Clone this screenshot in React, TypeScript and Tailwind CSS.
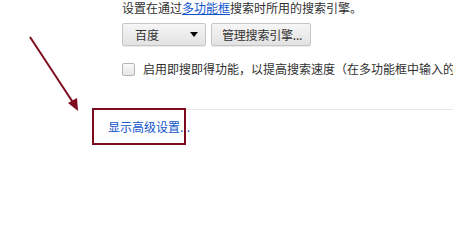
import { useState } from 'react'

const FONT = 'font-["Noto_Sans_CJK_SC","Liberation_Sans",sans-serif]'

function GrayButton({ children, className = '' }: { children: React.ReactNode; className?: string }) {
  return (
    <button
      className={`h-[23px] rounded-[2px] border border-[#c6c6c6] bg-gradient-to-b from-[#f6f6f6] to-[#e2e2e2] text-[12px] leading-none text-[#333] whitespace-nowrap shadow-[0_1px_0_rgba(0,0,0,0.08)] ${className}`}
    >
      {children}
    </button>
  )
}

export default function App() {
  const [instant, setInstant] = useState(false)

  return (
    <div className={`relative w-[453px] h-[237px] overflow-hidden bg-white ${FONT}`}>
      {/* Search section */}
      <div className="pl-[122px]">
        <div className="h-4 text-[12px] leading-4 text-[#303030] whitespace-nowrap">
          设置在通过<a className="text-[#1155cc] underline">多功能框</a>搜索时所用的搜索引擎。
        </div>

        <div className="mt-[7px] flex gap-[5px]">
          <GrayButton className="w-[84px] flex items-center justify-between pl-[12px] pr-[7px]">
            <span>百度</span>
            <span className="w-0 h-0 border-l-[4px] border-r-[4px] border-t-[5px] border-l-transparent border-r-transparent border-t-black" />
          </GrayButton>
          <GrayButton className="w-[100px] pl-[10px] pr-0 text-left tracking-[-0.2px]">管理搜索引擎...</GrayButton>
        </div>

        <label className="mt-[15px] flex items-center h-4 whitespace-nowrap">
          <span
            onClick={() => setInstant(!instant)}
            className="w-[13px] h-[13px] rounded-[2px] border border-[#b5b5b5] bg-gradient-to-b from-[#fafafa] to-[#e6e6e6] shrink-0"
          />
          <span className="ml-[8px] text-[12px] leading-4 text-[#303030]">
            启用即搜即得功能，以提高搜索速度（在多功能框中输入的
          </span>
        </label>
      </div>

      {/* Advanced settings */}
      <div className="mt-[32px] ml-[93px] border-t border-[#e8e8e8]">
        <div className="pl-[15px] pt-[9px] h-4 text-[12px] leading-4 whitespace-nowrap">
          <a className="text-[#1155cc]">显示高级设置...</a>
        </div>
      </div>

      {/* Annotation box */}
      <div className="absolute left-[92px] top-[108px] w-[94px] h-[37px] border-[2.5px] border-[#7d0a1e]" />

      {/* Annotation arrow */}
      <svg className="absolute left-0 top-0" width="453" height="237" viewBox="0 0 453 237">
        <line x1="30" y1="37" x2="74" y2="104" stroke="#7d0a1e" strokeWidth="2" />
        <polygon points="78,111 68,103 77,98" fill="#7d0a1e" />
      </svg>
    </div>
  )
}
